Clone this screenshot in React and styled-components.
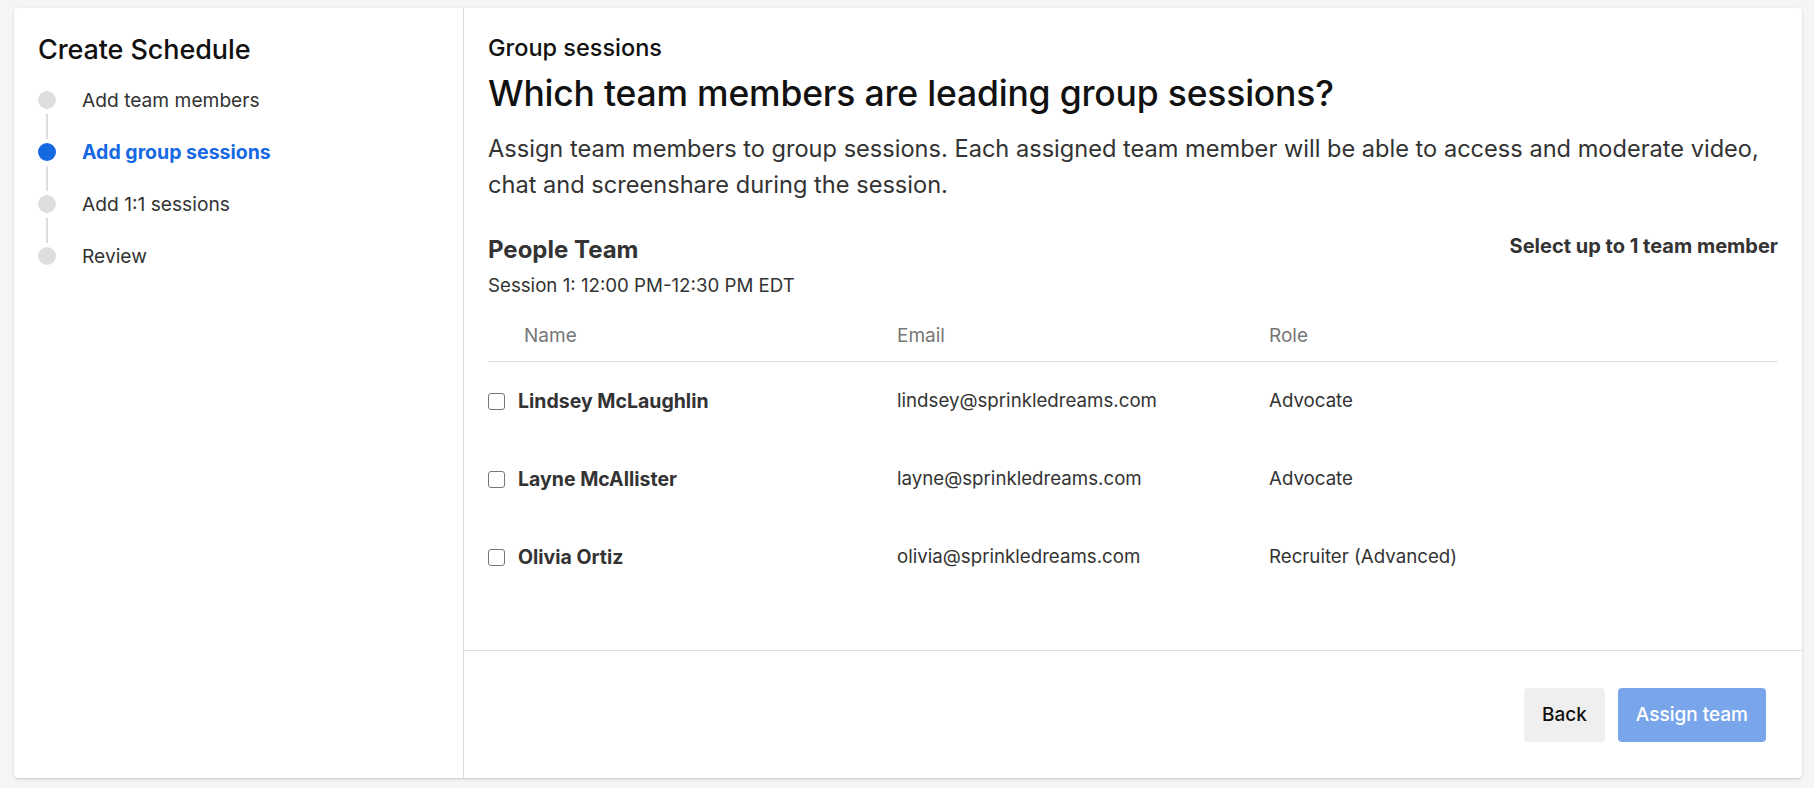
import React from "react";
import styled, { createGlobalStyle } from "styled-components";

const GlobalStyle = createGlobalStyle`
  * { box-sizing: border-box; }
  html, body { margin: 0; padding: 0; }
  body {
    background: #f5f5f5;
    font-family: Inter, "Noto Sans", "Liberation Sans", sans-serif;
    color: #333;
  }
`;

const Page = styled.div`
  height: 788px;
  padding: 8px 12px 10px 14px;
  display: flex;
`;

const Card = styled.div`
  flex: 1;
  display: flex;
  background: #fff;
  border-radius: 4px;
  box-shadow: 0 1px 3px rgba(0, 0, 0, 0.14), 0 1px 2px rgba(0, 0, 0, 0.06);
  overflow: hidden;
`;

const Sidebar = styled.aside`
  width: 450px;
  flex-shrink: 0;
  border-right: 1px solid #dcdcdc;
  padding: 25px 24px;
`;

const SidebarTitle = styled.h1`
  margin: 0;
  font-size: 27px;
  line-height: 34px;
  font-weight: 500;
  color: #111;
  letter-spacing: -0.1px;
`;

const Steps = styled.ol`
  list-style: none;
  margin: 7px 0 0;
  padding: 0;
`;

const Step = styled.li`
  position: relative;
  height: 52px;
  display: flex;
  align-items: center;
  gap: 26px;
  font-size: ${(p) => (p.$active ? "19.5px" : "19.2px")};
  color: ${(p) => (p.$active ? "#1668e3" : "#333")};
  font-weight: ${(p) => (p.$active ? 700 : 400)};

  &:not(:last-child)::after {
    content: "";
    position: absolute;
    left: 8px;
    top: 40px;
    width: 2px;
    height: 25px;
    background: #dedede;
  }
`;

const Dot = styled.span`
  width: 18px;
  height: 18px;
  border-radius: 50%;
  flex-shrink: 0;
  background: ${(p) => (p.$active ? "#1668e3" : "#dedede")};
`;

const Main = styled.main`
  flex: 1;
  display: flex;
  flex-direction: column;
  min-width: 0;
`;

const Content = styled.section`
  flex: 1;
  padding: 26px 24px 0;
`;

const Eyebrow = styled.div`
  font-size: 23.5px;
  line-height: 28px;
  font-weight: 500;
  color: #111;
`;

const Heading = styled.h2`
  margin: 11px 0 0;
  font-size: 35.5px;
  line-height: 42px;
  font-weight: 500;
  color: #111;
  letter-spacing: -0.2px;
`;

const Lead = styled.p`
  margin: 16px 0 0;
  font-size: 23.6px;
  line-height: 36px;
  color: #333;
`;

const TeamHeader = styled.div`
  margin-top: 33px;
  display: flex;
  justify-content: space-between;
  align-items: flex-start;
`;

const TeamName = styled.h3`
  margin: 0;
  font-size: 24px;
  line-height: 28px;
  font-weight: 700;
  color: #333;
`;

const SessionTime = styled.div`
  margin-top: 10px;
  font-size: 18.7px;
  line-height: 24px;
  color: #333;
`;

const Limit = styled.div`
  font-size: 20px;
  line-height: 20px;
  font-weight: 700;
  color: #333;
`;

const Table = styled.div`
  margin-top: 26px;
`;

const Row = styled.div`
  display: grid;
  grid-template-columns: 409px 372px 1fr;
  align-items: center;
  height: ${(p) => (p.$head ? "38px" : "78px")};
  border-bottom: ${(p) => (p.$head ? "1px solid #dedede" : "none")};
  padding-bottom: ${(p) => (p.$head ? "14px" : "0")};
`;

const HeadCell = styled.div`
  font-size: 19px;
  line-height: 24px;
  color: #767676;
  padding-left: ${(p) => p.$indent || 0}px;
`;

const Cell = styled.div`
  font-size: ${(p) => (p.$bold ? "19.5px" : "18.7px")};
  line-height: 24px;
  color: #333;
  display: flex;
  align-items: center;
  gap: 13px;
  font-weight: ${(p) => (p.$bold ? 700 : 400)};
`;

const Checkbox = styled.input.attrs({ type: "checkbox" })`
  appearance: none;
  margin: 0;
  width: 17px;
  height: 17px;
  border: 1.5px solid #767676;
  border-radius: 3px;
  background: #fff;
  flex-shrink: 0;
`;

const Footer = styled.footer`
  height: 128px;
  border-top: 1px solid #dedede;
  display: flex;
  justify-content: flex-end;
  align-items: center;
  gap: 13px;
  padding: 0 36px 0;
`;

const Button = styled.button`
  height: 54px;
  padding: 0 18px;
  border: none;
  border-radius: 4px;
  font-family: inherit;
  font-size: 19px;
  font-weight: 500;
  background: ${(p) => (p.$primary ? "#79a6ea" : "#efefef")};
  color: ${(p) => (p.$primary ? "#fff" : "#111")};
`;

const steps = [
  { label: "Add team members" },
  { label: "Add group sessions", active: true },
  { label: "Add 1:1 sessions" },
  { label: "Review" },
];

const members = [
  { name: "Lindsey McLaughlin", email: "lindsey@sprinkledreams.com", role: "Advocate" },
  { name: "Layne McAllister", email: "layne@sprinkledreams.com", role: "Advocate" },
  { name: "Olivia Ortiz", email: "olivia@sprinkledreams.com", role: "Recruiter (Advanced)" },
];

export default function App() {
  return (
    <>
      <GlobalStyle />
      <Page>
        <Card>
          <Sidebar>
            <SidebarTitle>Create Schedule</SidebarTitle>
            <Steps>
              {steps.map((s) => (
                <Step key={s.label} $active={s.active}>
                  <Dot $active={s.active} />
                  {s.label}
                </Step>
              ))}
            </Steps>
          </Sidebar>
          <Main>
            <Content>
              <Eyebrow>Group sessions</Eyebrow>
              <Heading>Which team members are leading group sessions?</Heading>
              <Lead>
                Assign team members to group sessions. Each assigned team member will be able to
                access and moderate video, chat and screenshare during the session.
              </Lead>
              <TeamHeader>
                <div>
                  <TeamName>People Team</TeamName>
                  <SessionTime>Session 1: 12:00 PM-12:30 PM EDT</SessionTime>
                </div>
                <Limit>Select up to 1 team member</Limit>
              </TeamHeader>
              <Table>
                <Row $head>
                  <HeadCell $indent={36}>Name</HeadCell>
                  <HeadCell>Email</HeadCell>
                  <HeadCell>Role</HeadCell>
                </Row>
                {members.map((m) => (
                  <Row key={m.email}>
                    <Cell $bold>
                      <Checkbox aria-label={m.name} />
                      {m.name}
                    </Cell>
                    <Cell>{m.email}</Cell>
                    <Cell>{m.role}</Cell>
                  </Row>
                ))}
              </Table>
            </Content>
            <Footer>
              <Button>Back</Button>
              <Button $primary>Assign team</Button>
            </Footer>
          </Main>
        </Card>
      </Page>
    </>
  );
}
